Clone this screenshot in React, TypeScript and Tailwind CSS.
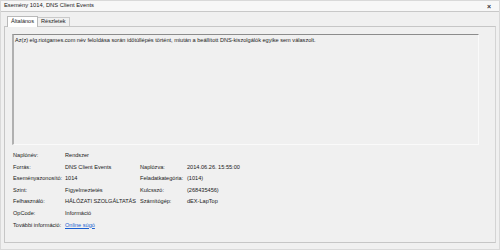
import { Fragment } from "react";

const font = { fontFamily: '"Liberation Sans", Arial, sans-serif' };

const rows: [string, string, string?, string?][] = [
  ["Naplónév:", "Rendszer"],
  ["Forrás:", "DNS Client Events", "Naplózva:", "2014.06.26. 15:55:00"],
  ["Eseményazonosító:", "1014", "Feladatkategória:", "(1014)"],
  ["Szint:", "Figyelmeztetés", "Kulcsszó:", "(268435456)"],
  ["Felhasználó:", "HÁLÓZATI SZOLGÁLTATÁS", "Számítógép:", "dEX-LapTop"],
  ["OpCode:", "Információ"],
];

export default function App() {
  return (
    <div
      style={font}
      className="w-[500px] h-[250px] bg-[#f0f0f0] text-[#1a1a1a] text-[5.6px] leading-none flex flex-col border border-[#d9d9d9] overflow-hidden"
    >
      {/* title bar */}
      <div className="h-[11px] shrink-0 flex items-center justify-between pl-[3px] pr-[8px] bg-[#f7f7f7] border-b border-[#c8c8c8]">
        <span className="text-[5.8px]">Esemény 1014, DNS Client Events</span>
        <span className="text-[7px] font-bold text-[#333]">×</span>
      </div>

      {/* tabs */}
      <div className="flex pl-[6px] pt-[3px] h-[14px] shrink-0 items-end">
        <div className="h-[11px] px-[3px] flex items-center bg-white border border-b-0 border-[#b9b9b9] relative top-[1px]">
          Általános
        </div>
        <div className="h-[9px] px-[3px] flex items-center border border-b-0 border-l-0 border-[#c9c9c9] bg-[#f0f0f0]">
          Részletek
        </div>
      </div>

      {/* tab panel */}
      <div className="mx-[3px] flex-1 mb-[6px] border border-[#c6c6c6] border-r-[#d4d4d4] flex flex-col pr-[16px] pl-[7px] pt-[7px]">
        <div className="h-[111px] shrink-0 border-t border-l-2 border-t-[#8c8c8c] border-l-[#b0b0b0] border-r border-b border-r-[#fafafa] border-b-[#fafafa] px-[1px] pt-[3px]">
          Az(z) elg.riotgames.com név feloldása során időtúllépés történt, miután a beállított DNS-kiszolgálók egyike sem válaszolt.
        </div>

        <div className="grid grid-cols-[52px_75px_47px_1fr] auto-rows-[11.6px] items-center mt-[5px] pl-[1px]">
          {rows.map(([a, b, c, d]) => (
            <Fragment key={a}>
              <span>{a}</span>
              <span>{b}</span>
              <span>{c ?? ""}</span>
              <span>{d ?? ""}</span>
            </Fragment>
          ))}
          <span>További információ:</span>
          <span className="text-[#1a5fd1] underline">Online súgó</span>
          <span />
          <span />
        </div>
      </div>
    </div>
  );
}
